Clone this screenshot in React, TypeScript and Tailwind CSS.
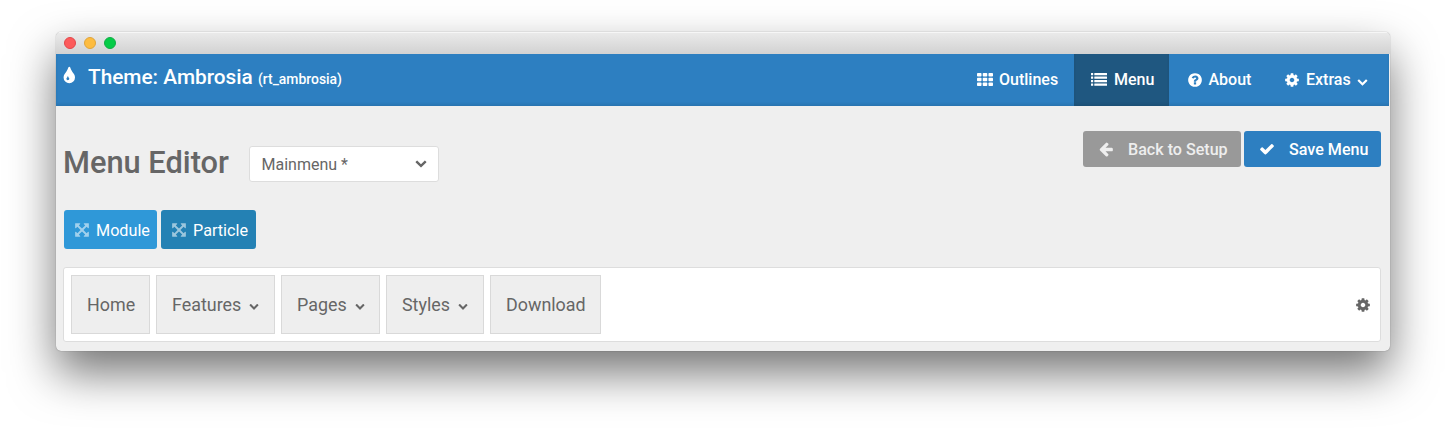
import type { ReactNode } from "react";

const paths = {
  tint: "M832 1152q0-36-20-69-1-1-15.500-22.500t-25.500-38-25-44-21-50.500q-4-16-21-16t-21 16q-7 23-21 50.500t-25 44-25.500 38-15.500 22.500q-20 33-20 69 0 53 37.500 90.500t90.500 37.500 90.500-37.500 37.500-90.500zm512-128q0 212-150 362t-362 150-362-150-150-362q0-145 81-275 6-9 62.500-90.500t101-151 99.500-178 83-201.500q9-30 34-47t51-17 51.500 17 33.500 47q28 93 83 201.500t99.500 178 101 151 62.500 90.500q81 127 81 275z",
  cog: "M1152 896q0-106-75-181t-181-75-181 75-75 181 75 181 181 75 181-75 75-181zm512-109v222q0 12-8 23t-20 13l-185 28q-19 54-39 91 35 50 107 138 10 12 10 25t-9 23q-27 37-99 108t-94 71q-12 0-26-9l-138-108q-44 23-91 38-16 136-29 186-7 28-36 28h-222q-14 0-24.500-8.500t-11.500-21.500l-28-184q-49-16-90-37l-141 107q-10 9-25 9-14 0-25-11-126-114-165-168-7-10-7-23 0-12 8-23 15-21 51-66.500t54-70.500q-27-50-41-99l-183-27q-13-2-21-12.500t-8-23.500v-222q0-12 8-23t19-13l186-28q14-46 39-92-40-57-107-138-10-12-10-24 0-10 9-23 26-36 98.500-107.500t94.500-71.500q13 0 26 10l138 107q44-23 91-38 16-136 29-186 7-28 36-28h222q14 0 24.500 8.500t11.500 21.500l28 184q49 16 90 37l142-107q9-9 24-9 13 0 25 10 129 119 165 170 7 8 7 22 0 12-8 23-15 21-51 66.500t-54 70.500q26 50 41 98l183 28q13 2 21 12.500t8 23.500z",
  question: "M1024 1376v-192q0-14-9-23t-23-9h-192q-14 0-23 9t-9 23v192q0 14 9 23t23 9h192q14 0 23-9t9-23zm256-672q0-88-55.500-163t-138.500-116-170-41q-243 0-371 213-15 24 8 42l132 100q7 6 19 6 16 0 25-12 53-68 86-92 34-24 86-24 48 0 85.500 26t37.500 59q0 38-20 61t-68 45q-63 28-115.500 86.500t-52.500 125.500v36q0 14 9 23t23 9h192q14 0 23-9t9-23q0-19 21.500-49.500t54.500-49.500q32-18 49-28.500t46-35 44.500-48 28-60.500 12.500-81zm384 192q0 209-103 385.500t-279.500 279.500-385.500 103-385.500-103-279.500-279.500-103-385.500 103-385.500 279.500-279.500 385.500-103 385.500 103 279.500 279.500 103 385.500z",
  chevron: "M1683 808l-742 741q-19 19-45 19t-45-19l-742-741q-19-19-19-45.500t19-45.500l166-165q19-19 45-19t45 19l531 531 531-531q19-19 45-19t45 19l166 165q19 19 19 45.500t-19 45.500z",
  arrow: "M1664 896v128q0 53-32.500 90.500t-84.500 37.500h-704l293 294q38 36 38 90t-38 90l-75 76q-37 37-90 37-52 0-91-37l-651-652q-37-37-37-90 0-52 37-91l651-650q38-38 91-38 52 0 90 38l75 74q38 38 38 91t-38 91l-293 293h704q52 0 84.500 37.500t32.500 90.500z",
  check: "M1671 566q0 40-28 68l-724 724-136 136q-28 28-68 28t-68-28l-136-136-362-362q-28-28-28-68t28-68l136-136q28-28 68-28t68 28l294 295 656-657q28-28 68-28t68 28l136 136q28 28 28 68z",
  arrows: "M1411 541l-355 355 355 355 144-144q29-31 70-14 39 17 39 59v448q0 26-19 45t-45 19h-448q-42 0-59-40-17-39 14-69l144-144-355-355-355 355 144 144q31 30 14 69-17 40-59 40h-448q-26 0-45-19t-19-45v-448q0-42 40-59 39-17 69 14l144 144 355-355-355-355-144 144q-19 19-45 19-12 0-24-5-40-17-40-59v-448q0-26 19-45t45-19h448q42 0 59 40 17 39-14 69l-144 144 355 355 355-355-144-144q-31-30-14-69 17-40 59-40h448q26 0 45 19t19 45v448q0 42-39 59-13 5-25 5-26 0-45-19z",
};

function Icon({ name, className }: { name: keyof typeof paths; className: string }) {
  return (
    <svg viewBox="0 0 1792 1792" fill="currentColor" className={`shrink-0 ${className}`}>
      <path d={paths[name]} />
    </svg>
  );
}

function GridIcon() {
  return (
    <svg viewBox="0 0 16 13" fill="currentColor" className="-mt-[2px] h-[13px] w-4">
      {[0, 4.75, 9.5].map((y) =>
        [0, 5.75, 11.5].map((x) => <rect key={`${x}-${y}`} x={x} y={y} width="4.5" height="3.5" rx="0.8" />)
      )}
    </svg>
  );
}

function ListIcon() {
  return (
    <svg viewBox="0 0 16 13" fill="currentColor" className="-mt-[2px] h-[13px] w-4">
      {[0, 3.5, 7, 10.5].map((y) => (
        <g key={y}>
          <rect x="0" y={y} width="2.2" height="2.3" rx="0.3" />
          <rect x="3.3" y={y} width="12.7" height="2.3" rx="0.3" />
        </g>
      ))}
    </svg>
  );
}

function NavItem({ className, children }: { className: string; children: ReactNode }) {
  return <a className={`flex h-full items-center ${className}`}>{children}</a>;
}

function MenuBlock({ label, width, arrow }: { label: string; width: string; arrow?: boolean }) {
  return (
    <div className={`flex h-[59px] items-center border border-[#d9d9d9] bg-[#eeeeee] pl-[15px] text-[17.9px] ${width}`}>
      <span className="pt-0.5">{label}</span>
      {arrow && <Icon name="chevron" className="mt-[3px] ml-2 size-[10px]" />}
    </div>
  );
}

export default function App() {
  return (
    <div className="h-[431px] w-[1446px] overflow-hidden bg-white px-14 pt-8 font-[Roboto,sans-serif] text-[#666666]">
      <div className="flex h-[319px] w-[1334px] flex-col overflow-hidden rounded-[5px] bg-[#efefef] shadow-[0_0_1px_rgba(0,0,0,0.5),0_22px_46px_rgba(0,0,0,0.54)]">
        <div className="flex h-[22px] shrink-0 items-center gap-2 bg-linear-to-b from-[#ebebeb] to-[#d2d2d2] pl-2 shadow-[inset_0_1px_0_#f6f6f6]">
          <i className="size-3 rounded-full border border-[#e2474a] bg-[#fc5b5b]" />
          <i className="size-3 rounded-full border border-[#dfa43b] bg-[#fdbc40]" />
          <i className="size-3 rounded-full border border-[#12ac46] bg-[#05cc47]" />
        </div>

        <header className="mr-px flex h-[52px] shrink-0 justify-between bg-[#2d7fc1] font-medium text-white shadow-[inset_0_-2px_3px_rgba(0,0,0,0.09)]">
          <div className="flex h-[46px] items-center pl-[3px]">
            <Icon name="tint" className="-mt-0.5 ml-px size-5" />
            <h1 className="ml-2 pt-0.5 text-[20.8px] whitespace-nowrap">
              Theme: Ambrosia <small className="text-[13.9px]">(rt_ambrosia)</small>
            </h1>
          </div>
          <nav className="flex text-[16px]">
            <NavItem className="w-[97px] gap-1.5">
              <GridIcon />
              <span>Outlines</span>
            </NavItem>
            <NavItem className="w-[95px] gap-[7px] bg-[#1f5780] pl-[17px] shadow-[inset_0_-2px_3px_rgba(0,0,0,0.09)]">
              <ListIcon />
              <span>Menu</span>
            </NavItem>
            <NavItem className="w-[115px] gap-1.5 pl-[17.5px]">
              <Icon name="question" className="-mt-px size-4" />
              <span>About</span>
            </NavItem>
            <NavItem className="w-[105px] gap-1.5">
              <Icon name="cog" className="-mt-px size-4" />
              <span>Extras</span>
              <Icon name="chevron" className="mt-[3px] size-[11px]" />
            </NavItem>
          </nav>
        </header>

        <main className="flex flex-col pr-[9px] pl-2">
          <div className="flex h-[104px] items-start justify-between">
            <div className="flex items-center pt-10">
              <h2 className="-mt-0.5 -ml-px w-[186px] text-[30.8px] leading-9 font-medium whitespace-nowrap">Menu Editor</h2>
              <div className="flex h-9 w-[190px] items-center justify-between rounded-[3px] border border-[#dddddd] bg-white pr-[11px] pl-[11.5px] text-[16px]">
                <span className="pt-px">Mainmenu *</span>
                <Icon name="chevron" className="-mt-0.5 size-3" />
              </div>
            </div>
            <div className="flex gap-[3px] pt-[25px] text-[16.1px] font-medium">
              <button className="flex h-9 w-[158px] items-center rounded-[3px] bg-[#999999] pl-[15px] text-[#eeeeee]">
                <Icon name="arrow" className="size-4" />
                <span className="ml-[14px] pt-0.5 whitespace-nowrap">Back to Setup</span>
              </button>
              <button className="flex h-9 w-[137px] items-center rounded-[3px] bg-[#2d7fc1] pl-[15px] text-white">
                <Icon name="check" className="size-4" />
                <span className="ml-[14px] pt-0.5 whitespace-nowrap">Save Menu</span>
              </button>
            </div>
          </div>

          <div className="flex h-[57px] gap-1 text-[16.2px] text-white">
            <button className="flex h-[39px] w-[93px] items-center rounded-[3px] bg-[#2f98d8] pl-2.5">
              <Icon name="arrows" className="mt-px size-4 opacity-55" />
              <span className="ml-1.5 pt-[3px]">Module</span>
            </button>
            <button className="flex h-[39px] w-[95px] items-center rounded-[3px] bg-[#2481b4] pl-2.5">
              <Icon name="arrows" className="mt-px size-4 opacity-55" />
              <span className="ml-1.5 pt-[3px]">Particle</span>
            </button>
          </div>

          <div className="-ml-px flex h-[75px] w-[1318px] items-center gap-1.5 rounded-[3px] border border-[#dddddd] bg-white pr-[9px] pl-[7px]">
            <MenuBlock label="Home" width="w-[79px]" />
            <MenuBlock label="Features" width="w-[119px]" arrow />
            <MenuBlock label="Pages" width="w-[99px]" arrow />
            <MenuBlock label="Styles" width="w-[98px]" arrow />
            <MenuBlock label="Download" width="w-[111px]" />
            <Icon name="cog" className="ml-auto size-4" />
          </div>
        </main>
      </div>
    </div>
  );
}
